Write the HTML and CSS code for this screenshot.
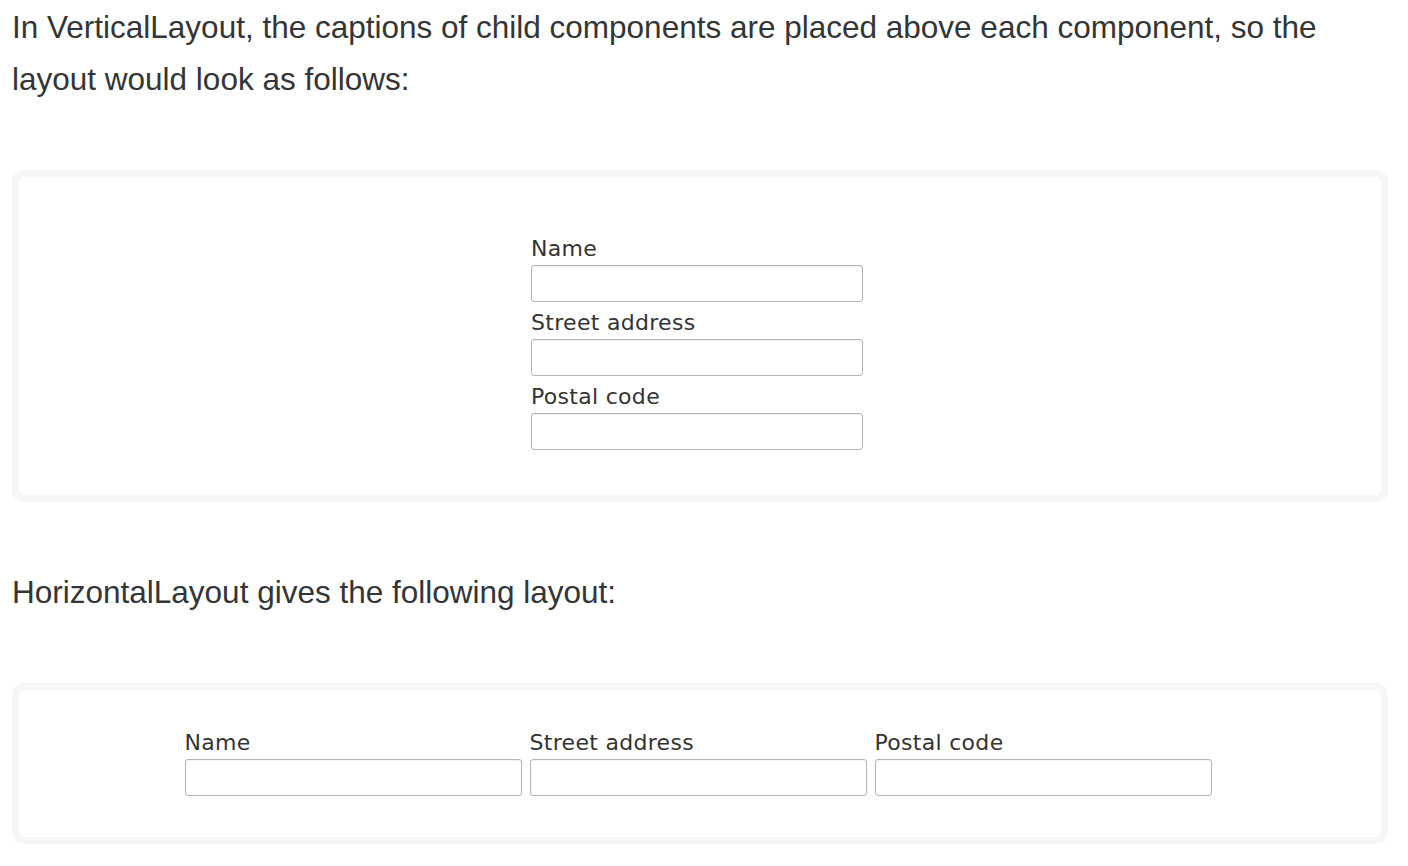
FILE: index.html
```html
<!DOCTYPE html>
<html lang="en">
<head>
<meta charset="utf-8">
<title>Layouts</title>
<link rel="stylesheet" href="styles.css">
</head>
<body>
<div class="page">
  <p class="text">In VerticalLayout, the captions of child components are placed above each component, so the layout would look as follows:</p>
  <div class="demo demo-vertical">
    <div class="vlayout">
      <div class="slot"><div class="caption">Name</div><div class="field"></div></div>
      <div class="slot"><div class="caption">Street address</div><div class="field"></div></div>
      <div class="slot"><div class="caption">Postal code</div><div class="field"></div></div>
    </div>
  </div>
  <p class="text">HorizontalLayout gives the following layout:</p>
  <div class="demo demo-horizontal">
    <div class="hlayout">
      <div class="slot"><div class="caption">Name</div><div class="field"></div></div>
      <div class="slot"><div class="caption">Street address</div><div class="field"></div></div>
      <div class="slot"><div class="caption">Postal code</div><div class="field"></div></div>
    </div>
  </div>
</div>
</body>
</html>
```
FILE: styles.css
```css
html, body {
  margin: 0;
  padding: 0;
  background: #ffffff;
}
.page {
  padding: 1px 20px 0 12px;
}
.text {
  margin: 0;
  max-width: 1340px;
  font-family: "Liberation Sans", Arial, sans-serif;
  font-size: 31.5px;
  line-height: 52px;
  color: #333536;
}
.text + .demo {
  margin-top: 65px;
}
.demo {
  margin: 64px 0;
  border: 7px solid #f5f6f7;
  border-radius: 12px;
  background: #fff;
  display: flex;
  justify-content: center;
  box-sizing: border-box;
}
.demo-vertical {
  height: 332px;
  padding: 51px 6px 0 0;
}
.demo-horizontal {
  height: 161px;
  padding: 32px 4px 0 0;
}
.vlayout {
  display: flex;
  flex-direction: column;
  width: 332px;
}
.hlayout {
  display: flex;
  gap: 8px;
}
.hlayout .slot {
  width: 337px;
}
.caption {
  font-family: "DejaVu Sans", Verdana, sans-serif;
  font-size: 22px;
  letter-spacing: 0.3px;
  line-height: 25px;
  height: 29px;
  padding-top: 8px;
  color: #333333;
  white-space: nowrap;
}
.field {
  height: 37px;
  box-sizing: border-box;
  border: 1px solid #b4b4b4;
  border-radius: 3px;
  background: #fff;
  box-shadow: inset 0 1px 0 #f2f2f2;
}
```
